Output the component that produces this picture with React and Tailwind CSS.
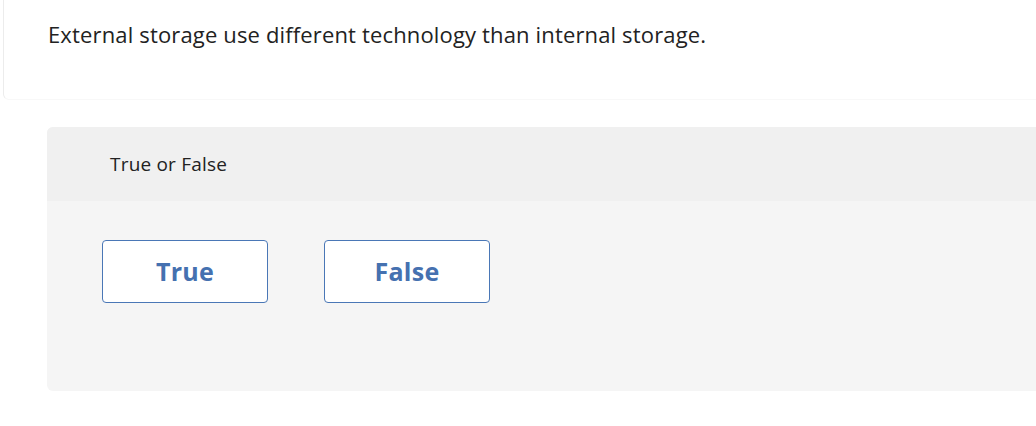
export default function App() {
  return (
    <div className="w-[1036px] h-[426px] overflow-hidden bg-white font-['Open_Sans',sans-serif] text-[#222]">
      <div className="w-[1100px]">
        <div className="ml-[3px] h-[100px] rounded-bl-md border-l border-b border-l-[#ececec] border-b-[#f8f8f8] pl-[44px] pt-[19px]">
          <p className="text-[22px] leading-[30px] tracking-[0.15px] text-[#222]">
            External storage use different technology than internal storage.
          </p>
        </div>
        <div className="ml-[47px] mt-[27px] h-[264px] rounded-l-md bg-[#f5f5f5] overflow-hidden">
          <div className="h-[74px] bg-[#f0f0f0] pl-[63px] flex items-center">
            <span className="text-[19px] tracking-[0.2px] text-[#222]">True or False</span>
          </div>
          <div className="flex gap-[56px] pl-[55px] pt-[39px]">
            <button className="w-[166px] h-[63px] rounded-[4px] border border-[#4a77b6] bg-white text-[25px] tracking-[0.3px] font-bold text-[#4571b0]">
              True
            </button>
            <button className="w-[166px] h-[63px] rounded-[4px] border border-[#4a77b6] bg-white text-[25px] tracking-[0.3px] font-bold text-[#4571b0]">
              False
            </button>
          </div>
        </div>
      </div>
    </div>
  );
}
